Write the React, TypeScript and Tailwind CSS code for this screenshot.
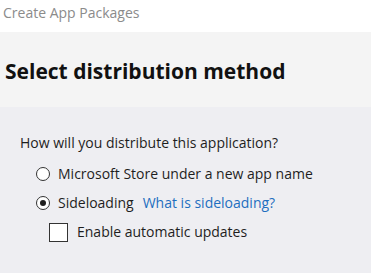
export default function App() {
  return (
    <div
      className="w-[371px] h-[273px] flex flex-col bg-[#eeeef2] text-[#1e1e1e] overflow-hidden"
      style={{ fontFamily: '"Open Sans", "Noto Sans", sans-serif' }}
    >
      <div className="h-[32px] bg-white pl-[3px] pt-[3px] text-[14px] leading-[20px] text-[#8b8b8b]">
        Create App Packages
      </div>
      <div className="h-[75px] bg-[#f4f4f4] pl-[5px] pt-[25px]">
        <div className="text-[21px] font-bold leading-[28px] text-[#111]">Select distribution method</div>
      </div>
      <div className="flex flex-col pl-[20px] pt-[26px] text-[14px]">
        <div className="leading-[20px]">How will you distribute this application?</div>
        <div className="flex flex-col pl-[16px] pt-[11px] gap-[9px]">
          <label className="flex items-center gap-[8px] leading-[20px]">
            <span className="w-[14px] h-[14px] rounded-full border border-[#333] bg-white" />
            <span>Microsoft Store under a new app name</span>
          </label>
          <label className="flex items-center gap-[8px] leading-[20px]">
            <span className="w-[14px] h-[14px] rounded-full border border-[#333] bg-white flex items-center justify-center">
              <span className="w-[6px] h-[6px] rounded-full bg-[#1e1e1e]" />
            </span>
            <span>Sideloading</span>
            <span className="text-[#1e6fc0] ml-[1px]">What is sideloading?</span>
          </label>
          <label className="flex items-center gap-[9px] pl-[13px] leading-[20px]">
            <span className="w-[19px] h-[19px] border border-[#333] bg-white" />
            <span>Enable automatic updates</span>
          </label>
        </div>
      </div>
    </div>
  );
}
